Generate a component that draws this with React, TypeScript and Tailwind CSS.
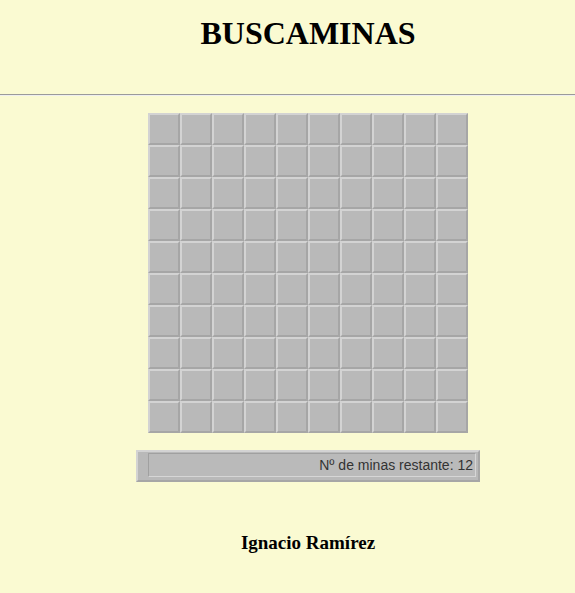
import React from 'react'

const cells = Array.from({ length: 100 }, (_, i) => i)

const App = () => {
  return (
    <div className="min-h-[593px] w-full overflow-hidden bg-[#fafad2] font-['Liberation_Serif',serif] text-black">
      <header className="pt-[15px] pl-[41px] text-center">
        <h1 className="text-[32px] font-bold leading-[37px]">BUSCAMINAS</h1>
      </header>
      <hr className="mt-[42px] h-0 border-0 border-t border-b border-t-[#9a9a9a] border-b-[#eeeeee]" />
      <main className="flex flex-col items-center pl-[41px]">
        <div className="mt-[17px] grid grid-cols-10">
          {cells.map((c) => (
            <div
              key={c}
              className="h-8 w-8 border-2 border-t-[#d3d3d3] border-l-[#d3d3d3] border-b-[#a6a6a6] border-r-[#a6a6a6] bg-[#b9b9b9]"
            />
          ))}
        </div>
        <div className="mt-[17px] flex h-[32px] w-[344px] border-2 border-t-[#d3d3d3] border-l-[#d3d3d3] border-b-[#a6a6a6] border-r-[#a6a6a6] bg-[#b9b9b9] pt-[1px] pb-[3px] pl-[10px] pr-[2px]">
          <div className="flex flex-1 items-center justify-end border border-t-[#a0a0a0] border-l-[#a0a0a0] border-b-[#d6d6d6] border-r-[#d6d6d6] bg-[#bababa] pr-[2px] font-['Liberation_Sans',sans-serif] text-[14px] text-[#333333]">
            Nº de minas restante: 12
          </div>
        </div>
      </main>
      <footer className="mt-[50px] pl-[41px] text-center">
        <p className="text-[19px] font-bold leading-[22px]">Ignacio Ramírez</p>
      </footer>
    </div>
  )
}

export default App
